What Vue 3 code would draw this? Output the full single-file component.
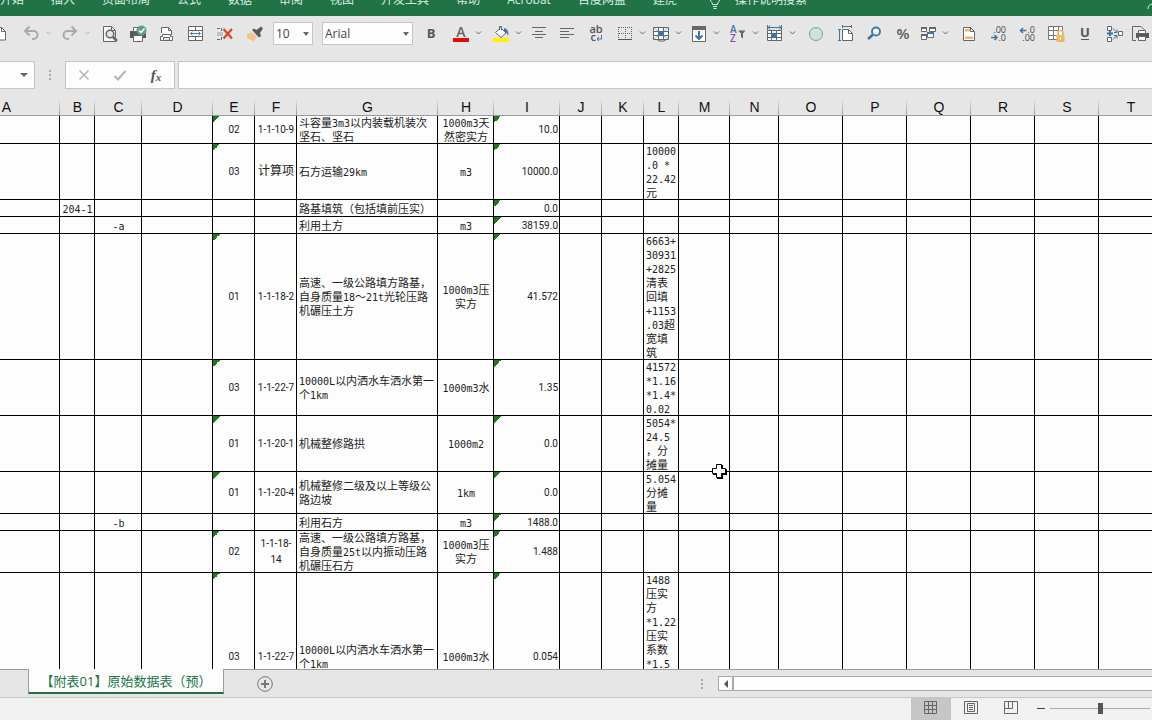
<script setup>
import { ref } from 'vue'

const ribbonTabs = ['开始', '插入', '页面布局', '公式', '数据', '审阅', '视图', '开发工具', '帮助', 'Acrobat', '百度网盘', '建虎']

const G = '#666'
const B = '#3f74a3'
const art = {
  page: `<path d="M3.500 6.500h7l4 4v8.500h-11z" fill="#fff" stroke="${G}"/><path d="M10.500 6.500v4h4" fill="none" stroke="${G}"/>`,
  undo: `<path d="M10.500 5.500L6 10l4.500 4.500M6 10h8.500a4 4 0 0 1 0 8H13" fill="none" stroke="#aaa" stroke-width="2"/>`,
  redo: `<path d="M13.500 5.500L18 10l-4.500 4.500M18 10H9.500a4 4 0 0 0 0 8H11" fill="none" stroke="#aaa" stroke-width="2"/>`,
  preview: `<path d="M5.500 5.500h8l4 4v11h-12z" fill="#f7f7f7" stroke="${G}"/><path d="M13.500 5.500v4h4" fill="none" stroke="${G}"/><circle cx="12" cy="13" r="3.800" fill="#e6e6e6" stroke="${G}" stroke-width="1.500"/><path d="M15 16l4 4" stroke="${G}" stroke-width="2.500"/>`,
  print: `<path d="M4 10h16v7H4z" fill="#5a5a5a"/><path d="M7.500 6.500h9v4h-9zM7.500 14.500h9v6h-9z" fill="#fff" stroke="${G}"/><circle cx="15.500" cy="9.500" r="5" fill="#5ba38a"/><path d="M13 9.500l2 2 3.500-4" fill="none" stroke="#fff" stroke-width="1.500"/>`,
  pagesetup: `<path d="M7.500 12V6.500h7l3 3V14" fill="#fff" stroke="${G}"/><path d="M14.500 6.500v3h3" fill="none" stroke="${G}"/><path d="M6.500 15.500h2v-2h8v2h2v4h-12z" fill="#fff" stroke="${G}"/><path d="M9.500 16.500h6v3h-6z" fill="#e6e6e6" stroke="${G}"/>`,
  merge: `<path d="M5.500 5.500h14v14h-14zM5.500 9.500h14M5.500 15.500h14M12.500 5.500v4M12.500 15.500v4" fill="#fff" stroke="${G}"/><path d="M7.500 12.500h10M9.500 10.800l-2 1.700 2 1.700M15.500 10.800l2 1.700-2 1.700" fill="none" stroke="${B}"/>`,
  remove: `<path d="M4 7.500h5M4 18.500h5M8.500 7v3M8.500 16v3" stroke="${G}" stroke-dasharray="3 1"/><path d="M4 11h6v4H4z" fill="#b9c3cc"/><path d="M10.500 8l8.500 9.500M19 8l-8.500 9.500" stroke="#d24726" stroke-width="2.200"/>`,
  brush: `<path d="M4 13l5-2 5 5-4 5c-2-3-4-3-6-3z" fill="#f3c58d"/><path d="M9 9l2-1.500L13.500 9 18 5.500l2 2L17 12l1 3-2 1.500z" fill="#5a5a5a"/>`,
  bold: `<text x="12" y="17" text-anchor="middle" font-size="13" font-weight="700" fill="#555">B</text>`,
  fontcolor: `<text x="12" y="16" text-anchor="middle" font-size="14" font-weight="600" fill="#666">A</text><path d="M4 17h16v4H4z" fill="#e00b0b"/>`,
  bucket: `<path d="M6.500 11.500l5-5 5.500 5.500-5 4.500z" fill="#fff" stroke="${G}"/><path d="M10.500 9V5.500h2V9" fill="none" stroke="${G}"/><path d="M15 7c4 1 5 4 4 8-1-3-2-4-4-5z" fill="${B}"/><path d="M4 17h16v4H4z" fill="#fff200"/>`,
  center: `<path d="M5 6.500h14M8 10.500h8M5 13.500h14M8 16.500h8" stroke="${G}"/>`,
  left: `<path d="M5 7.500h14M5 10.500h9M5 13.500h14M5 16.500h9" stroke="${G}"/>`,
  wrap: `<text x="12" y="12" text-anchor="middle" font-size="11" font-weight="600" fill="#555">ab</text><text x="6.500" y="20" font-size="11" font-weight="600" fill="#555">c</text><path d="M17.500 14v4h-4M15 16l-2 2 2 2" fill="none" stroke="${B}"/>`,
  borders: `<path d="M5.500 6v12M12.500 6v12M18.500 6v12M6 6.500h12M6 12.500h12" fill="none" stroke="${G}" stroke-dasharray="1 1"/><path d="M5 18.500h14" stroke="#555"/>`,
  objects: `<path d="M4.500 6.500h15v12h-15zM4.500 10.500h15M4.500 14.500h15M9.500 6.500v12M14.500 6.500v12" fill="#fff" stroke="${G}"/><path d="M5 7l14 11M19 7L5 18" stroke="#8fb0cc"/><path d="M9 10h6v5H9z" fill="${B}"/><path d="M8 18.500l2 1.500h5l2-1.500" fill="none" stroke="${G}"/>`,
  fill: `<path d="M5.500 6.500h13v14h-13z" fill="#fff" stroke="${G}"/><path d="M5 5h14v4H5z" fill="${G}"/><path d="M12 10v8M8.500 14.500L12 18l3.500-3.500" fill="none" stroke="${B}" stroke-width="2"/>`,
  sort: `<text x="4" y="12" font-size="10" font-weight="600" fill="${B}">A</text><text x="4" y="21" font-size="10" font-weight="600" fill="#8a4bb0">Z</text><path d="M12 9.500h7.500L17 12.500v5l-2-1.500v-3.500z" fill="${G}"/>`,
  freeze: `<path d="M4.500 9.500h14v10h-14zM4.500 12.500h14M4.500 16.500h14M8.500 9.500v10M13.500 9.500v10" fill="#fff" stroke="${G}"/><path d="M8 12h6v5H8z" fill="${B}"/><path d="M5 6.500h13M7 4.500l-2 2 2 2M16 4.500l2 2-2 2M4.500 4v5M18.500 4v5" fill="none" stroke="${B}"/>`,
  circle: `<circle cx="12" cy="13" r="6.500" fill="#cfe3d9" stroke="#7f9f91"/>`,
  pagesize: `<path d="M9.500 8.500h6l4 4v7h-10z" fill="#fff" stroke="${G}"/><path d="M15.500 8.500v4h4" fill="none" stroke="${G}"/><path d="M9.500 5.500h9M9.500 4v3M18.500 4v3M6.500 8v12M5 8.500h3M5 19.500h3" fill="none" stroke="${B}"/>`,
  find: `<circle cx="14" cy="10.500" r="4" fill="#f4f8fb" stroke="${B}" stroke-width="1.800"/><path d="M11 13.500L6 18" stroke="${B}" stroke-width="2.500"/>`,
  percent: `<text x="12" y="18" text-anchor="middle" font-size="15" font-weight="600" fill="#5a5a5a">%</text>`,
  windows: `<path d="M5.500 6.500h5v4h-5zM13.500 6.500h6v4h-6zM5.500 14.500h5v4h-5z" fill="#fff" stroke="${G}"/><path d="M5 6h6v2H5zM13 6h7v2h-7zM5 13h6v2H5z" fill="${G}"/><path d="M11.500 11.500h6v5h-6z" fill="#fff" stroke="${B}"/><path d="M11 11h7v2h-7z" fill="${B}"/>`,
  footer: `<path d="M6.500 6.500h7l4 4v9h-11z" fill="#fff" stroke="${G}"/><path d="M13.500 6.500v4h4" fill="none" stroke="${G}"/><path d="M8 8h5v2.500H8zM8 15.500h8V18H8z" fill="#e9b96e"/>`,
  lessdec: `<text x="20" y="12" text-anchor="end" font-size="9" fill="#444">.00</text><text x="20" y="20" text-anchor="end" font-size="9" fill="#444">.0</text><path d="M5 16.500h6M8.500 14l2.500 2.500L8.500 19" fill="none" stroke="${B}" stroke-width="1.500"/>`,
  moredec: `<text x="20" y="12" text-anchor="end" font-size="9" fill="#444">.0</text><text x="20" y="20" text-anchor="end" font-size="9" fill="#444">.00</text><path d="M5.500 9.500h6M8 7L5.500 9.500 8 12" fill="none" stroke="${B}" stroke-width="1.500"/>`,
  protect: `<path d="M4.500 5.500h14v13h-14zM4.500 9.500h14M4.500 14.500h14M9.500 5.500v13M14.500 5.500v13" fill="#fff" stroke="#777"/><path d="M12.500 14h8v7h-8z" fill="#eeb866"/><path d="M14 14v-2a2.500 2.500 0 0 1 5 0v2" fill="none" stroke="#eeb866" stroke-width="1.500"/><path d="M16.500 16v3" stroke="#fff"/>`,
  underline: `<text x="12" y="16" text-anchor="middle" font-size="13" font-weight="700" fill="#555">U</text><path d="M8 18.500h8" stroke="#555"/>`,
  hierarchy: `<path d="M5.500 5.500h4v4h-4zM5.500 16.500h4v4h-4zM16.500 10.500h4v4h-4z" fill="#fff" stroke="${G}"/><path d="M5 12.500h6M8 10v5" stroke="${B}" stroke-width="2"/><path d="M11 7.500l4 4M15 8.500v3h-3M11 18.500l4-4M12 14.500h3v3" fill="none" stroke="${B}"/>`,
  printpage: `<path d="M13 5.500H4.500v14H8M13 5.500l4 4" fill="none" stroke="${G}"/><path d="M8 12h13v5H8z" fill="#5a5a5a"/><path d="M10.500 9.500h7v3h-7zM10.500 15.500h7v4h-7z" fill="#fff" stroke="${G}"/>`
}

const fileTools = [
  { id: 'page', label: '新建', w: 28 },
  { id: 'undo', label: '撤消', w: 39, more: true, dim: true },
  { id: 'redo', label: '恢复', w: 40, more: true, dim: true },
  { id: 'preview', label: '打印预览', w: 28 },
  { id: 'print', label: '快速打印', w: 28 },
  { id: 'pagesetup', label: '页面设置', w: 29 },
  { id: 'merge', label: '合并单元格', w: 30 },
  { id: 'remove', label: '删除', w: 30 },
  { id: 'brush', label: '格式刷', w: 32 }
]
const editTools = [
  { id: 'bold', label: '加粗', w: 30 },
  { id: 'fontcolor', label: '字体颜色', w: 40, more: true },
  { id: 'bucket', label: '填充颜色', w: 38, more: true },
  { id: 'center', label: '居中', w: 28 },
  { id: 'left', label: '左对齐', w: 29 },
  { id: 'wrap', label: '自动换行', w: 29 },
  { id: 'borders', label: '边框', w: 36, more: true },
  { id: 'objects', label: '选择', w: 38, more: true },
  { id: 'fill', label: '填充', w: 39, more: true },
  { id: 'sort', label: '排序和筛选', w: 37, more: true },
  { id: 'freeze', label: '冻结窗格', w: 41, more: true },
  { id: 'circle', label: '形状', w: 29 },
  { id: 'pagesize', label: '纸张大小', w: 29 },
  { id: 'find', label: '查找', w: 29 },
  { id: 'percent', label: '百分比', w: 25 },
  { id: 'windows', label: '切换窗口', w: 41, more: true },
  { id: 'footer', label: '页眉和页脚', w: 29 },
  { id: 'lessdec', label: '减少小数位数', w: 29 },
  { id: 'moredec', label: '增加小数位数', w: 29 },
  { id: 'protect', label: '保护工作表', w: 29 },
  { id: 'underline', label: '下划线', w: 29 },
  { id: 'hierarchy', label: '追踪', w: 26 },
  { id: 'printpage', label: '打印', w: 28 }
]

const letters = 'ABCDEFGHIJKLMNOPQRST'.split('')
const widths = [107, 35, 47, 71, 42, 42, 141, 56, 66, 42, 42, 35, 51, 49, 64, 64, 64, 64, 64, 0]

const rows = [
  { h: 28, E: '02', F: '1-1-10-9', G: '斗容量3m3以内装载机装次\n坚石、坚石', H: '1000m3天\n然密实方', I: '10.0' },
  { h: 56, E: '03', F: '计算项', G: '石方运输29km', H: 'm3', I: '10000.0', L: '10000\n.0 *\n22.42\n元' },
  { h: 17, B: '204-1', G: '路基填筑（包括填前压实）', I: '0.0' },
  { h: 17, C: '-a', G: '利用土方', H: 'm3', I: '38159.0' },
  { h: 126, E: '01', F: '1-1-18-2', G: '高速、一级公路填方路基，\n自身质量18～21t光轮压路\n机碾压土方', H: '1000m3压\n实方', I: '41.572', L: '6663+\n30931\n+2825\n清表\n回填\n+1153\n.03超\n宽填\n筑' },
  { h: 56, E: '03', F: '1-1-22-7', G: '10000L以内洒水车洒水第一\n个1km', H: '1000m3水', I: '1.35', L: '41572\n*1.16\n*1.4*\n0.02' },
  { h: 56, E: '01', F: '1-1-20-1', G: '机械整修路拱', H: '1000m2', I: '0.0', L: '5054*\n24.5\n，分\n摊量' },
  { h: 42, E: '01', F: '1-1-20-4', G: '机械整修二级及以上等级公\n路边坡', H: '1km', I: '0.0', L: '5.054\n分摊\n量' },
  { h: 17, C: '-b', G: '利用石方', H: 'm3', I: '1488.0' },
  { h: 42, E: '02', F: '1-1-18-\n14', G: '高速、一级公路填方路基，\n自身质量25t以内振动压路\n机碾压石方', H: '1000m3压\n实方', I: '1.488' },
  { h: 168, E: '03', F: '1-1-22-7', G: '10000L以内洒水车洒水第一\n个1km', H: '1000m3水', I: '0.054', L: '1488\n压实\n方\n*1.22\n压实\n系数\n*1.5' }
]

// Splits a cell into Latin and Chinese runs so each gets its own face.
const runs = (text) => (text || '').match(/[\x00-\x7f]+|[^\x00-\x7f]+/g) || []
const isLatin = (run) => /^[\x00-\x7f]/.test(run)
const flagged = (row, col) => (col === 'E' || col === 'I') && !!row[col]

const fontSize = ref('10')
const fontName = ref('Arial')
const formula = ref('')
const zoom = ref(50)
</script>

<template>
  <div class="app">
    <header class="ribbon">
      <nav>
        <button v-for="t in ribbonTabs" :key="t" type="button">{{ t }}</button>
      </nav>
      <svg class="bulb" width="12" height="18" viewBox="0 0 12 18" fill="none" stroke="#d8eee2"><path d="M3.500 12.500c0-3-3-3.500-3-7a5.500 5.500 0 0 1 11 0c0 3.500-3 4-3 7zM4 14.500h4M4.500 16.500h3" /></svg>
      <button type="button" class="tell">操作说明搜索</button>
      <svg class="share" width="8" height="12" viewBox="0 0 8 12" fill="none" stroke="#d8eee2"><path d="M4 9c0-3 1.500-5 5-5" /></svg>
    </header>

    <div class="toolbar">
      <div v-for="t in fileTools" :key="t.id" class="slot" :style="{ width: t.w + 'px' }">
        <button type="button" class="tool" :aria-label="t.label"><svg width="24" height="24" viewBox="0 0 24 24" v-html="art[t.id]" /></button>
        <button v-if="t.more" type="button" class="more" :class="{ dim: t.dim }" :aria-label="t.label + '选项'"><svg width="7" height="6" viewBox="0 0 7 6"><path d="M1 1.500l2.500 2.500L6 1.500" /></svg></button>
      </div>
      <div class="combo size">
        <select v-model="fontSize" aria-label="字号"><option>10</option></select>
        <i></i>
      </div>
      <div class="combo face">
        <select v-model="fontName" aria-label="字体"><option>Arial</option></select>
        <i></i>
      </div>
      <div v-for="t in editTools" :key="t.id" class="slot" :style="{ width: t.w + 'px' }">
        <button type="button" class="tool" :aria-label="t.label"><svg width="24" height="24" viewBox="0 0 24 24" v-html="art[t.id]" /></button>
        <button v-if="t.more" type="button" class="more" :aria-label="t.label + '选项'"><svg width="7" height="6" viewBox="0 0 7 6"><path d="M1 1.500l2.500 2.500L6 1.500" /></svg></button>
      </div>
    </div>

    <div class="formula">
      <button type="button" class="namebox" aria-label="名称框"><i></i></button>
      <span class="dots"></span>
      <div class="entry">
        <button type="button" aria-label="取消"><svg width="14" height="14" viewBox="0 0 14 14"><path d="M2.500 2.500l9 9M11.500 2.500l-9 9" fill="none" stroke="#b5b5b5" stroke-width="1.500" /></svg></button>
        <button type="button" aria-label="输入"><svg width="14" height="14" viewBox="0 0 14 14"><path d="M1.500 8l3.500 3.500L12.500 3" fill="none" stroke="#b5b5b5" stroke-width="2.200" /></svg></button>
        <button type="button" class="fx" aria-label="插入函数">f<small>x</small></button>
      </div>
      <input v-model="formula" type="text" aria-label="编辑栏" />
    </div>

    <main class="sheet">
      <table>
        <colgroup>
          <col v-for="(w, i) in widths" :key="i" :style="{ width: w ? w + 'px' : 'auto' }" />
        </colgroup>
        <thead>
          <tr><th v-for="l in letters" :key="l" scope="col">{{ l }}</th></tr>
        </thead>
        <tbody>
          <tr v-for="(r, i) in rows" :key="i" :style="{ height: r.h + 'px' }">
            <td v-for="l in letters" :key="l" :class="['c' + l, { flag: flagged(r, l), deep: r.h > 150 }]"><span v-for="(run, k) in runs(r[l])" :key="k" :class="isLatin(run) ? 'latin' : 'han'">{{ run }}</span></td>
          </tr>
        </tbody>
      </table>
    </main>

    <div class="tabs">
      <button type="button" class="tab">【附表01】原始数据表（预）</button>
      <button type="button" class="add" aria-label="新工作表"><svg width="16" height="16" viewBox="0 0 16 16"><circle cx="8" cy="8" r="7.300" fill="none" stroke="#777" /><path d="M8 4v8M4 8h8" stroke="#777" stroke-width="2" /></svg></button>
      <span class="dots"></span>
      <div class="scroll">
        <button type="button" aria-label="向左滚动"><svg width="6" height="8" viewBox="0 0 6 8"><path d="M5 0v8L1 4z" fill="#555" /></svg></button>
      </div>
    </div>

    <footer class="status">
      <button type="button" class="view on" aria-label="普通"><svg width="14" height="14" viewBox="0 0 14 14" fill="none" stroke="#666"><path d="M.5.500h12v12H.5zM4.500.500v12M8.500.500v12M.5 4.500h12M.5 8.500h12" /></svg></button>
      <button type="button" class="view" aria-label="页面布局视图"><svg width="14" height="14" viewBox="0 0 14 14" fill="none" stroke="#666"><path d="M.5.500h13v12H.5zM3.500 2.500h7v8h-7zM5 4.500h4M5 6.500h4M5 8.500h4" /></svg></button>
      <button type="button" class="view" aria-label="分页预览"><svg width="14" height="14" viewBox="0 0 14 14" fill="none" stroke="#666"><path d="M.5.500h13v12H.5zM4.500.500v7M.5 7.500h8V.5" /></svg></button>
      <button type="button" class="minus" aria-label="缩小"></button>
      <input v-model="zoom" type="range" min="0" max="100" aria-label="显示比例" />
    </footer>

    <svg class="cursor" width="17" height="17" viewBox="0 0 17 17"><path d="M6 2h6v4h4v6h-4v4H6v-4H2V6h4z" fill="#000" /><path d="M5.500 1.500h5v4h4v5h-4v4h-5v-4h-4v-5h4z" fill="#fff" stroke="#000" /></svg>
  </div>
</template>

<style>
body {
  overflow: hidden;
}
</style>

<style scoped>
.app {
  position: relative;
  display: flex;
  flex-direction: column;
  height: 100vh;
  overflow: hidden;
  background: #e6e6e6;
  font-family: "Open Sans", "Noto Sans CJK SC", sans-serif;
  font-size: 12px;
  color: #222;
}
button {
  display: flex;
  align-items: center;
  justify-content: center;
  flex: none;
  margin: 0;
  padding: 0;
  border: 0;
  background: none;
  font: inherit;
  color: inherit;
  white-space: nowrap;
}
svg {
  display: block;
  flex: none;
}
.ribbon {
  display: flex;
  flex: none;
  height: 16px;
  overflow: hidden;
  background: #217346;
  color: #d8eee2;
}
.ribbon nav {
  display: flex;
  gap: 27px;
}
.ribbon button {
  height: 18px;
  margin-top: -9px;
  line-height: 18px;
}
.bulb {
  margin: -8px 14px 0 32px;
}
.share {
  margin-left: auto;
}
.toolbar {
  display: flex;
  flex: none;
  align-items: center;
  height: 34px;
  margin-left: -11px;
}
.slot {
  display: flex;
  flex: none;
  align-items: center;
}
.tool {
  width: 28px;
  height: 24px;
}
.more {
  width: 7px;
  height: 24px;
}
.more path {
  fill: none;
  stroke: #666;
}
.more.dim path {
  stroke: #b0b0b0;
}
.combo {
  position: relative;
  flex: none;
  height: 23px;
}
.combo select {
  width: 100%;
  height: 100%;
  padding: 0 2px;
  border: 1px solid #c6c6c6;
  border-radius: 0;
  background: #fdfdfd;
  appearance: none;
  font: inherit;
  font-size: 12px;
  color: #444;
}
.combo i,
.namebox i {
  width: 0;
  border: 3px solid transparent;
  border-top: 4px solid #666;
  border-bottom: 0;
}
.combo i {
  position: absolute;
  right: 4px;
  top: 10px;
  pointer-events: none;
}
.size {
  width: 40px;
  margin-right: 9px;
}
.face {
  width: 91px;
  margin-right: 4px;
}
.formula {
  display: flex;
  flex: none;
  height: 28px;
  margin-top: 11px;
}
.namebox {
  justify-content: flex-end;
  width: 35px;
  padding-right: 6px;
  border: 1px solid #c6c6c6;
  border-left: 0;
  background: #fdfdfd;
}
.namebox i {
  border-width: 4px 4px 0;
}
.dots {
  flex: none;
  align-self: center;
  width: 2px;
  height: 10px;
  background: repeating-linear-gradient(#aaa 0 2px, transparent 2px 4px);
}
.formula .dots {
  margin: 0 14px;
}
.entry {
  display: flex;
  flex: none;
  box-sizing: border-box;
  width: 110px;
  border: 1px solid #c6c6c6;
  background: #fdfdfd;
}
.entry button {
  width: 36px;
}
.fx {
  font: italic bold 15px "Liberation Serif", serif;
  color: #555;
}
.fx small {
  font-size: 11px;
  padding-top: 4px;
}
.formula input {
  flex: 1;
  min-width: 0;
  box-sizing: border-box;
  margin: 0 0 0 3px;
  padding: 0 6px;
  border: 1px solid #c6c6c6;
  border-right: 0;
  background: #fdfdfd;
  font: inherit;
}
.sheet {
  flex: 1;
  min-height: 0;
  overflow: hidden;
  margin-top: 9px;
}
table {
  width: calc(100% + 58px);
  margin-left: -47px;
  border-spacing: 0;
  table-layout: fixed;
}
th {
  box-sizing: border-box;
  height: 18px;
  padding: 1px 0 0;
  border-bottom: 1px solid #9b9b9b;
  background: linear-gradient(#e6e6e6, #9b9b9b) right / 1px 100% no-repeat #e6e6e6;
  font: 14px/16px "Liberation Sans", Arial, sans-serif;
  color: #111;
}
td {
  padding: 0 2px;
  background-color: #fdfdfd;
  box-shadow: inset -1px -1px 0 #000;
  font: 11px/14px "Liberation Sans", sans-serif;
  color: #222;
  text-align: center;
  vertical-align: middle;
  white-space: pre;
}
td span {
  line-height: 0;
}
.han {
  font-family: "Noto Sans CJK SC", sans-serif;
}
.latin {
  font-family: "DejaVu Sans Mono", monospace;
  font-size: 10px;
}
.cE .latin,
.cF .latin,
.cI .latin {
  font-family: Roboto, "Liberation Sans", sans-serif;
  font-size: 10px;
}
.cE,
.cF,
.cI {
  padding-bottom: 2px;
}
.cF {
  padding-left: 0;
  padding-right: 0;
  line-height: 16px;
}
.cB {
  padding: 0;
}
.cF .han {
  font-size: 12px;
}
.cG,
.cL {
  text-align: left;
}
.cL {
  padding-right: 0;
}
.cL.deep {
  vertical-align: top;
}
.cI {
  text-align: right;
}
.flag {
  background-image: linear-gradient(135deg, #1c7a1c 50%, transparent 50%);
  background-size: 7px 7px;
  background-repeat: no-repeat;
}
.tabs {
  display: flex;
  flex: none;
  box-sizing: border-box;
  height: 29px;
  padding-left: 28px;
  border-top: 1px solid #9b9b9b;
  border-bottom: 1px solid #c6c6c6;
}
.tab {
  box-sizing: border-box;
  width: 196px;
  height: 25px;
  margin-top: -1px;
  border: solid #9b9b9b;
  border-width: 0 1px;
  border-bottom: 2px solid #217346;
  background: #fdfdfd;
  font-size: 13px;
  color: #217346;
}
.add {
  width: 16px;
  margin-left: 33px;
}
.tabs .dots {
  margin: 0 15px 0 auto;
}
.scroll {
  display: flex;
  box-sizing: border-box;
  flex: 0 0 434px;
  height: 15px;
  margin-top: 6px;
  border: 1px solid #aaa;
  border-right: 0;
  background: #fdfdfd;
}
.scroll button {
  width: 15px;
  border-right: 2px solid #aaa;
}
.status {
  display: flex;
  flex: none;
  justify-content: flex-end;
  height: 22px;
  padding-right: 2px;
  background: #f1f1f1;
}
.view {
  width: 40px;
  padding-bottom: 2px;
}
.view.on {
  background: #c6c6c6;
}
.minus {
  width: 19px;
}
.minus::before {
  content: "";
  width: 8px;
  height: 1px;
  margin-bottom: 2px;
  background: #444;
}
.status input {
  width: 100px;
  height: 20px;
  margin: 0;
  appearance: none;
  background: linear-gradient(#aaa, #aaa) center / 100% 1px no-repeat;
}
.status input::-webkit-slider-thumb {
  appearance: none;
  width: 5px;
  height: 11px;
  background: #555;
}
.cursor {
  position: absolute;
  left: 711px;
  top: 463px;
}
</style>
